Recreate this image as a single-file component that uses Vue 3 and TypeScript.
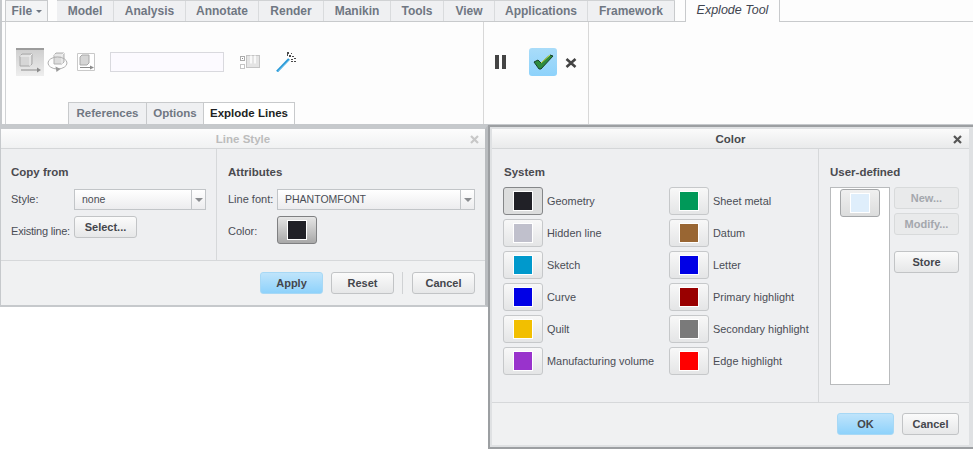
<script setup lang="ts">
interface Tab { label: string; width: number }
interface Swatch { label: string; color: string; active?: boolean }

const tabs: Tab[] = [
  { label: 'Model', width: 57 },
  { label: 'Analysis', width: 72 },
  { label: 'Annotate', width: 73 },
  { label: 'Render', width: 65 },
  { label: 'Manikin', width: 67 },
  { label: 'Tools', width: 53 },
  { label: 'View', width: 51 },
  { label: 'Applications', width: 93 },
  { label: 'Framework', width: 87 },
]

const systemLeft: Swatch[] = [
  { label: 'Geometry', color: '#212127', active: true },
  { label: 'Hidden line', color: '#c0c0cc' },
  { label: 'Sketch', color: '#0099cc' },
  { label: 'Curve', color: '#0000e6' },
  { label: 'Quilt', color: '#f2bf00' },
  { label: 'Manufacturing volume', color: '#9933cc' },
]

const systemRight: Swatch[] = [
  { label: 'Sheet metal', color: '#009959' },
  { label: 'Datum', color: '#996633' },
  { label: 'Letter', color: '#0000e6' },
  { label: 'Primary highlight', color: '#990000' },
  { label: 'Secondary highlight', color: '#7a7a7a' },
  { label: 'Edge highlight', color: '#ff0000' },
]
</script>

<template>
  <div class="page">
    <!-- Ribbon -->
    <header class="ribbon">
      <nav class="tabs">
        <div class="tab-file">File <span class="caret"></span></div>
        <div class="tab-list">
          <div v-for="t in tabs" :key="t.label" class="tab" :style="{ width: t.width + 'px' }">{{ t.label }}</div>
        </div>
        <div class="tab-active">Explode Tool</div>
      </nav>

      <div class="ribbon-body">
        <section class="group group-main">
          <div class="tools">
            <div class="tool-on">
              <svg width="28" height="28" viewBox="0 0 28 28">
                <path d="M4 8l2-2h10v10l-2 2H4z" fill="#d6d6d6" stroke="#a8a8a8" />
                <path d="M4 8h10v10M14 8l2-2" fill="none" stroke="#f2f2f2" />
                <path d="M5 22h17" stroke="#8c8c8c" stroke-width="1" />
                <path d="M21 19.500l4 2.500-4 2.500z" fill="#8c8c8c" />
              </svg>
            </div>
            <svg class="tool-spin" width="21" height="24" viewBox="0 0 21 24">
              <path d="M7 5l2-2h8v9l-2 2H7z" fill="#dcdcdc" stroke="#b0b0b0" />
              <path d="M7 5h8v9M15 5l2-2" fill="none" stroke="#f4f4f4" />
              <ellipse cx="10.500" cy="13" rx="9.500" ry="6" fill="none" stroke="#b0b0b0" />
              <path d="M8.500 16.500l5 2.500-4 3z" fill="#9a9a9a" />
            </svg>
            <svg class="tool-move" width="18" height="18" viewBox="0 0 18 18">
              <path d="M.5.500h17v17H.5z" fill="#fff" stroke="#c9c9c9" />
              <path d="M3 4l2-2h7v8l-2 2H3z" fill="#d6d6d6" stroke="#a8a8a8" />
              <path d="M3 14.500h11" stroke="#8c8c8c" />
              <path d="M13 12.500l4 2-4 2z" fill="#8c8c8c" />
            </svg>
            <div class="tool-input"></div>
            <svg class="tool-grid" width="20" height="14" viewBox="0 0 20 14">
              <rect x=".5" y="1.500" width="4" height="4" fill="#fff" stroke="#aaa" />
              <rect x="2" y="3" width="1" height="1" fill="#888" />
              <rect x=".5" y="9.500" width="4" height="4" fill="#fff" stroke="#c4c4c4" />
              <rect x="6.500" y=".5" width="13" height="12" fill="#e4e4e4" stroke="#c4c4c4" />
              <path d="M11 .5v8M15 .5v8" stroke="#fff" stroke-width="1.500" />
            </svg>
            <svg class="tool-wand" width="21" height="20" viewBox="0 0 21 20">
              <path d="M1 19.500L13 7" stroke="#2a9ad8" stroke-width="2.500" />
              <path d="M2 19.500L13.500 8" stroke="#9fdcf8" stroke-width=".8" />
              <path d="M11 0h2v2h-2zM15 1h1v1h-1zM13 3h2v2h-2zM16 4h2v1h-2zM18 6h2v1h-2zM15 7h2v1h-2zM18 9h2v1h-2zM15 9h2v1h-2zM11 2h1v2h-1z" fill="#4a4a4a" />
            </svg>
          </div>
          <div class="subtabs">
            <div class="subtab refs">References</div>
            <div class="subtab opts">Options</div>
            <div class="subtab-on">Explode Lines</div>
          </div>
        </section>

        <section class="group group-run">
          <div class="pause"><i></i><i></i></div>
          <div class="ok-tool">
            <svg width="24" height="18" viewBox="0 0 24 18">
              <path d="M3 9l4-2 3 3 9-8 3 1-12 13H8z" fill="#2e8b3e" stroke="#17402a" stroke-width="1" />
              <path d="M10 10l9-8" stroke="#d3ea4a" stroke-width="1" fill="none" />
            </svg>
          </div>
          <svg class="cancel-tool" width="12" height="10" viewBox="0 0 12 10">
            <path d="M1.500 1l9 8M10.500 1l-9 8" stroke="#444" stroke-width="2.600" fill="none" />
          </svg>
        </section>
      </div>
    </header>

    <div class="dialogs">
      <!-- Line Style -->
      <section class="dialog line-style">
        <div class="title title-off">
          <span>Line Style</span>
          <svg class="close close-off" width="9" height="9" viewBox="0 0 9 9">
            <path d="M1 1l7 7M8 1L1 8" stroke="#c8c8c8" stroke-width="2.200" fill="none" />
          </svg>
        </div>
        <div class="ls-body">
          <div class="ls-col ls-copy">
            <h3>Copy from</h3>
            <div class="ls-row combo-row">
              <label class="ls-label-a">Style:</label>
              <div class="combo combo-a"><span>none</span><b></b></div>
            </div>
            <div class="ls-row select-row">
              <label class="ls-label-a existing">Existing line:</label>
              <button class="btn btn-select">Select...</button>
            </div>
          </div>
          <div class="ls-col ls-attr">
            <h3>Attributes</h3>
            <div class="ls-row combo-row">
              <label class="ls-label-b">Line font:</label>
              <div class="combo combo-b"><span>PHANTOMFONT</span><b></b></div>
            </div>
            <div class="ls-row select-row">
              <label class="ls-label-b">Color:</label>
              <button class="swatch-btn pressed"><span style="background: #212127"></span></button>
            </div>
          </div>
        </div>
        <div class="footer ls-footer">
          <button class="btn action primary">Apply</button>
          <button class="btn action">Reset</button>
          <span class="footer-sep"></span>
          <button class="btn action">Cancel</button>
        </div>
      </section>

      <!-- Color -->
      <section class="dialog color">
        <div class="title">
          <span>Color</span>
          <svg class="close" width="9" height="9" viewBox="0 0 9 9">
            <path d="M1 1l7 7M8 1L1 8" stroke="#555" stroke-width="2.200" fill="none" />
          </svg>
        </div>
        <div class="color-body">
          <div class="system">
            <h3>System</h3>
            <div class="system-cols">
              <div class="system-col first">
                <div v-for="s in systemLeft" :key="s.label" class="system-row">
                  <button class="swatch-btn" :class="{ active: s.active }"><span :style="{ background: s.color }"></span></button>
                  <span>{{ s.label }}</span>
                </div>
              </div>
              <div class="system-col">
                <div v-for="s in systemRight" :key="s.label" class="system-row">
                  <button class="swatch-btn"><span :style="{ background: s.color }"></span></button>
                  <span>{{ s.label }}</span>
                </div>
              </div>
            </div>
          </div>
          <div class="user">
            <h3>User-defined</h3>
            <div class="user-cols">
              <div class="user-list">
                <button class="swatch-btn user-swatch"><span style="background: #dfeefb"></span></button>
              </div>
              <div class="user-actions">
                <button class="btn side" disabled>New...</button>
                <button class="btn side" disabled>Modify...</button>
                <button class="btn side store">Store</button>
              </div>
            </div>
          </div>
        </div>
        <div class="footer color-footer">
          <button class="btn action ok primary">OK</button>
          <button class="btn action ok">Cancel</button>
        </div>
      </section>
    </div>
  </div>
</template>

<style>
html, body { margin: 0; background: #fff; }
</style>

<style scoped>
.page {
  width: 973px;
  height: 449px;
  overflow: hidden;
  font-family: "Liberation Sans", Arial, sans-serif;
  font-size: 11px;
  color: #4a4d55;
  background: #fff;
}
button { font-family: inherit; margin: 0; padding: 0; }
h3 { margin: 0; font-size: 11.500px; font-weight: bold; color: #4a4a4f; line-height: 14px; }

/* ribbon */
.ribbon {
  height: 125px;
  box-sizing: border-box;
  border-left: 2px solid #c6c9cc;
  border-bottom: 1px solid #c6c9cc;
  background: #fdfdfd;
  display: flex;
  flex-direction: column;
}
.tabs {
  height: 22px;
  flex: none;
  box-sizing: border-box;
  padding-left: 3px;
  display: flex;
  font-size: 12px;
  font-weight: bold;
  line-height: 21px;
  color: #6f7782;
  border-bottom: 1px solid #c8cacc;
}
.tab-file {
  width: 43px;
  height: 21px;
  box-sizing: border-box;
  border: 1px solid #c8cacc;
  border-bottom: 0;
  background: #f3f4f5;
  text-align: center;
}
.caret {
  display: inline-block;
  border: 3px solid transparent;
  border-top: 3px solid #6f7782;
  border-bottom: 0;
  vertical-align: 2px;
}
.tab-list {
  display: flex;
  margin-left: 9px;
  border-left: 1px solid #c8cacc;
  border-top: 1px solid #d0d2d4;
  height: 21px;
  line-height: 20px;
  box-sizing: border-box;
  margin-right: 10px;
}
.tab {
  box-sizing: border-box;
  background: #eff0f2;
  border-right: 1px solid #d9dbdd;
  text-align: center;
}
.tab:first-child { margin-left: -1px; }
.tab:last-child { border-right-color: #c8cacc; }
.tab-active {
  width: 95px;
  height: 22px;
  box-sizing: border-box;
  border: 1px solid #c8cacc;
  border-top: 0;
  border-bottom: 0;
  background: #fdfdfd;
  font-style: italic;
  font-weight: normal;
  font-size: 12.500px;
  color: #3f4550;
  text-align: center;
}
.ribbon-body { flex: 1; display: flex; min-height: 0; }
.group { height: 100%; box-sizing: border-box; border-right: 1px solid #d8d8d8; }
.group-main {
  width: 479px;
  margin-left: 3px;
  border-left: 1px solid #d0d2d4;
  display: flex;
  flex-direction: column;
}
.tools { display: flex; align-items: center; padding: 26px 0 0 10px; height: 28px; }
.tool-on {
  width: 28px;
  height: 28px;
  background: linear-gradient(#cfcfcf, #eeeeee);
  border-top: 2px solid #9c9c9c;
  box-sizing: border-box;
  flex: none;
}
.tool-on svg { display: block; margin-top: -2px; }
.tool-spin { margin-left: 3px; flex: none; }
.tool-move { margin-left: 9px; flex: none; }
.tool-input {
  width: 114px;
  height: 20px;
  box-sizing: border-box;
  margin-left: 15px;
  background: #fcfaff;
  border: 1px solid #d9d9de;
  flex: none;
}
.tool-grid { margin-left: 16px; flex: none; }
.tool-wand { margin-left: 16px; flex: none; }
.subtabs { margin-top: auto; padding-left: 62px; display: flex; height: 22px; font-size: 11.500px; font-weight: bold; line-height: 21px; }
.subtab, .subtab-on { box-sizing: border-box; border: 1px solid #c8cacc; border-bottom: 0; text-align: center; margin-right: -1px; }
.subtab { background: #eff0f2; color: #6f7782; }
.refs { width: 79px; }
.opts { width: 58px; }
.subtab-on { width: 92px; background: #fff; color: #1d1f24; }
.group-run { width: 105px; display: flex; align-items: flex-start; padding-top: 26px; }
.pause { display: flex; gap: 3px; margin: 7px 0 0 11px; }
.pause i { display: block; width: 4px; height: 14px; background: #444; }
.ok-tool {
  width: 28px;
  height: 28px;
  margin-left: 23px;
  border-radius: 3px;
  background: linear-gradient(#a9dcf9, #8dd2fb);
  display: flex;
  align-items: center;
  justify-content: center;
}
.cancel-tool { margin: 10px 0 0 8px; }

/* dialogs */
.dialogs { display: flex; align-items: flex-start; }
.dialog { box-sizing: border-box; display: flex; flex-direction: column; background: #eeeff1; }
.title {
  height: 20px;
  flex: none;
  box-sizing: border-box;
  border-bottom: 1px solid #d4d6d8;
  background: linear-gradient(#fbfbfb, #e9eaeb);
  display: flex;
  align-items: center;
  justify-content: center;
  position: relative;
  font-weight: bold;
  font-size: 11.500px;
  color: #46484d;
}
.title-off { color: #bcbcbc; background: linear-gradient(#fdfdfd, #f0f1f2); }
.close { position: absolute; right: 7px; top: 6px; }
.close-off { right: 6px; }

.line-style {
  width: 489px;
  height: 182px;
  border: solid #c6c9cc;
  border-width: 4px 3px 2px 1px;
  border-right-color: #b9bcbf;
}
.ls-body { display: flex; height: 112px; flex: none; box-sizing: border-box; border-bottom: 1px solid #d6d8da; }
.ls-col { box-sizing: border-box; padding-top: 16px; }
.ls-copy { width: 216px; padding-left: 10px; border-right: 1px solid #d6d8da; }
.ls-attr { padding-left: 11px; flex: 1; }
.ls-row { display: flex; align-items: center; }
.combo-row { margin-top: 10px; height: 21px; }
.combo-row label, .combo span { position: relative; top: -1px; }
.select-row { margin-top: 6px; min-height: 22px; align-items: flex-start; }
.select-row label { line-height: 30px; }
.ls-label-a { width: 63px; flex: none; }
.ls-label-b { width: 49px; flex: none; }
.existing { letter-spacing: -0.2px; white-space: nowrap; }
.combo {
  height: 21px;
  box-sizing: border-box;
  border: 1px solid #c2c5c8;
  background: linear-gradient(#ffffff, #ececee);
  display: flex;
  align-items: center;
  justify-content: space-between;
  padding-left: 7px;
  font-size: 10.500px;
}
.combo-a { width: 132px; }
.combo-b { width: 198px; }
.combo b {
  width: 14px;
  height: 19px;
  box-sizing: border-box;
  border-left: 1px solid #c2c5c8;
  position: relative;
}
.combo b::after {
  content: '';
  position: absolute;
  left: 3px;
  top: 8px;
  border: 4px solid transparent;
  border-top: 4px solid #8a8c8f;
  border-bottom: 0;
}
.btn {
  box-sizing: border-box;
  height: 22px;
  border: 1px solid #c2c4c6;
  border-radius: 3px;
  background: linear-gradient(#fbfbfb, #e6e7e8);
  font-size: 11px;
  font-weight: bold;
  color: #44464c;
  text-align: center;
}
.btn-select { width: 63px; }
.swatch-btn {
  width: 40px;
  height: 28px;
  box-sizing: border-box;
  border: 1px solid #c6c8ca;
  border-radius: 3px;
  background: linear-gradient(#f8f8f8, #e4e5e6);
  display: flex;
  align-items: center;
  justify-content: center;
  flex: none;
}
.swatch-btn span {
  display: block;
  width: 20px;
  height: 20px;
  box-sizing: border-box;
  border: 1px solid #fff;
}
.swatch-btn.pressed { border-color: #7f8082; background: linear-gradient(#e6e6e6, #a8a8a8); }
.swatch-btn.active { border-color: #858789; background: #dcdddd; }
.footer { display: flex; align-items: flex-start; flex: 1; background: #f0f1f2; box-sizing: border-box; }
.ls-footer { padding: 11px 10px 0 259px; }
.action { width: 63px; }
.ls-footer .action + .action { margin-left: 8px; }
.footer-sep { width: 1px; height: 22px; background: #d0d2d4; margin: 0 9px 0 8px; }
.footer-sep + .action { margin-left: 0 !important; }
.primary { background: linear-gradient(#bfe4fb, #8ed2fb); border-color: #a7d8f5; }

.color {
  flex: 1;
  height: 324px;
  border: solid #9c9fa2;
  border-width: 2px 0 2px 2px;
  padding: 2px 4px 2px 2px;
  background: #dfe1e3;
}
.color-body { display: flex; height: 254px; flex: none; background: #eeeff1; box-sizing: border-box; border-bottom: 1px solid #d6d8da; }
.system { width: 327px; box-sizing: border-box; padding: 16px 0 0 11px; border-right: 1px solid #d6d8da; }
.system h3 { padding-left: 1px; }
.system-cols { display: flex; margin-top: 8px; }
.system-col { display: flex; flex-direction: column; gap: 4px; }
.system-col.first { width: 166px; }
.system-row { display: flex; align-items: center; gap: 4px; height: 28px; font-size: 10.900px; }
.user { flex: 1; padding: 16px 0 0 11px; }
.user-cols { display: flex; margin-top: 8px; }
.user-list {
  width: 60px;
  height: 198px;
  box-sizing: border-box;
  border: 1px solid #b9bbbd;
  background: #fff;
  padding: 1px 0 0 9px;
}
.user-swatch { background: linear-gradient(#f0f0f0, #dcdddd); border-color: #a5a7a9; }
.user-actions { display: flex; flex-direction: column; margin-left: 4px; width: 65px; }
.side { width: 65px; margin-bottom: 4px; }
.side:disabled { color: #a4a7ad; background: #e9eaeb; border-color: #d8dadb; }
.store { margin-top: 12px; }
.color-footer { padding: 10px 10px 0 345px; background: #f0f1f2; }
.ok { width: 57px; }
.ok + .ok { margin-left: 8px; }
</style>
